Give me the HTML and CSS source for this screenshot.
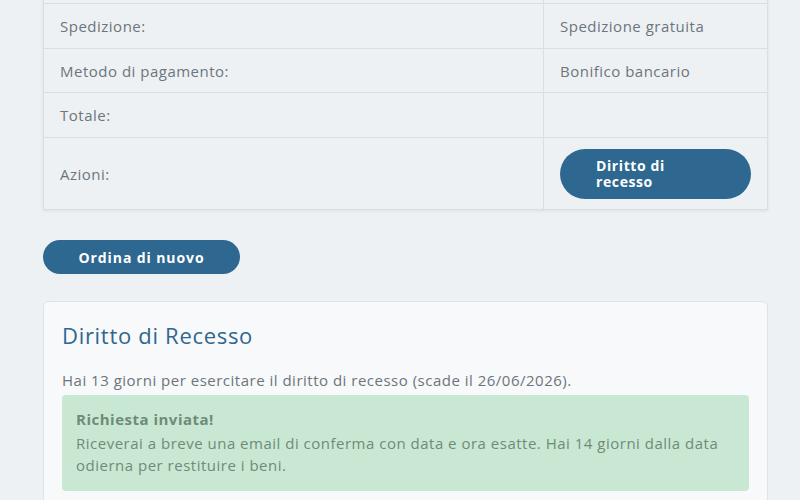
FILE: index.html
```html
<!DOCTYPE html>
<html lang="it">
<head>
    <meta charset="UTF-8">
    <meta name="viewport" content="width=device-width, initial-scale=1.0">
    <title>Dettagli ordine</title>
    <link rel="stylesheet" href="styles.css">
</head>
<body>
    <div class="page">
        <table class="order-table">
            <tr>
                <td></td>
                <td></td>
            </tr>
            <tr>
                <td>Spedizione:</td>
                <td>Spedizione gratuita</td>
            </tr>
            <tr>
                <td>Metodo di pagamento:</td>
                <td>Bonifico bancario</td>
            </tr>
            <tr>
                <td>Totale:</td>
                <td></td>
            </tr>
            <tr>
                <td>Azioni:</td>
                <td><button class="btn btn-recesso"><span>Diritto di recesso</span></button></td>
            </tr>
        </table>

        <button class="btn btn-again">Ordina di nuovo</button>

        <section class="card">
            <h2 class="card-title">Diritto di Recesso</h2>
            <p class="card-text">Hai 13 giorni per esercitare il diritto di recesso (scade il 26/06/2026).</p>
            <div class="alert">
                <strong>Richiesta inviata!</strong>
                <p>Riceverai a breve una email di conferma con data e ora esatte. Hai 14 giorni dalla data odierna per restituire i beni.</p>
            </div>
        </section>
    </div>
</body>
</html>
```

FILE: styles.css
```css
body {
    margin: 0;
    background-color: #eef1f3;
    font-family: "Open Sans", sans-serif;
    letter-spacing: 0.5px;
    color: #6c757d;
}

.page {
    width: 725px;
    margin: -41.5px 0 0 43px;
}

.order-table {
    width: 100%;
    border-collapse: collapse;
    background-color: #eef1f3;
    box-shadow: 0 1px 3px rgba(0, 0, 0, 0.08);
    font-size: 15px;
}

.order-table td {
    border: 1px solid #dadee1;
    padding: 11px 16px 10.5px;
    line-height: 22px;
    height: 22px;
}

.order-table td:last-child {
    width: 191px;
}

.btn {
    border: none;
    color: #fff;
    background-color: #2e678f;
    font-family: inherit;
    font-weight: 700;
    font-size: 14px;
    letter-spacing: 0.6px;
    cursor: pointer;
}

.btn-recesso {
    display: block;
    width: 100%;
    height: 50px;
    border-radius: 25px;
    padding: 0 36px;
    text-align: left;
    line-height: 16px;
}

.btn-recesso span {
    display: block;
    max-width: 90px;
}

.btn-again {
    display: block;
    width: 197px;
    height: 34px;
    border-radius: 17px;
    margin: 30px 0 27px;
    letter-spacing: 0.9px;
}

.card {
    background-color: #f8f9fa;
    border: 1px solid #e0e3e6;
    border-radius: 6px;
    padding: 20px 18px 18px;
}

.card-title {
    margin: 0 0 21px;
    font-size: 22px;
    font-weight: 500;
    line-height: 26px;
    letter-spacing: 0.7px;
    color: #2e678f;
}

.card-text {
    margin: 0 0 4px;
    font-size: 15px;
    line-height: 22px;
}

.alert {
    background-color: #c9e8d4;
    border-radius: 4px;
    padding: 13px 14px 15px;
    font-size: 15px;
    line-height: 22px;
    color: #6f8b77;
}

.alert strong {
    display: block;
    margin-bottom: 2px;
}

.alert p {
    margin: 0;
}
```
